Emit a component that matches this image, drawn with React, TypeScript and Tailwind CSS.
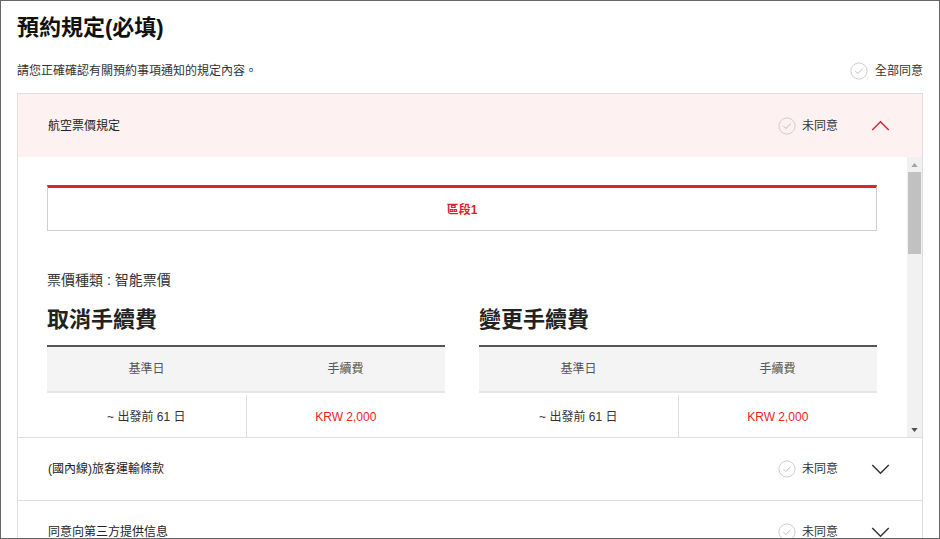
const font = { fontFamily: '"Liberation Sans", "Noto Sans CJK TC", sans-serif' };

function CheckCircle() {
  return (
    <svg viewBox="0 0 20 20" className="w-[18px] h-[18px] flex-shrink-0">
      <circle cx="10" cy="10" r="9" fill="none" stroke="#c9c9c9" strokeWidth="1" />
      <path d="M6 10.2l2.6 2.6L14 7.6" fill="none" stroke="#b5b5b5" strokeWidth="1" />
    </svg>
  );
}

function Chevron({ up }: { up?: boolean }) {
  return (
    <svg viewBox="0 0 20 12" className="w-[19px] h-[11px] ml-[33px]">
      <polyline
        points={up ? "1,11 10,2 19,11" : "1,1 10,10 19,1"}
        fill="none"
        stroke={up ? "#d8262e" : "#333"}
        strokeWidth="1.6"
      />
    </svg>
  );
}

const feeTables = [
  { title: "取消手續費", from: "~ 出發前 61 日", fee: "KRW 2,000" },
  { title: "變更手續費", from: "~ 出發前 61 日", fee: "KRW 2,000" },
];

function AccordionHeader({ title, open }: { title: string; open?: boolean }) {
  return (
    <div
      className={`h-[63px] flex items-center justify-between pl-[30px] pr-[32px] ${
        open ? "bg-[#fdf1f1]" : "bg-white border-t border-[#dedede]"
      }`}
    >
      <span className="text-[12px] text-[#222]">{title}</span>
      <div className="flex items-center">
        <CheckCircle />
        <span className="text-[12px] text-[#333] ml-[6px]">未同意</span>
        <Chevron up={open} />
      </div>
    </div>
  );
}

function Scrollbar() {
  return (
    <div className="w-[15px] flex-shrink-0 bg-[#f1f1f1] flex flex-col items-center">
      <div className="h-[15px] flex items-center justify-center">
        <svg viewBox="0 0 8 5" className="w-[7px] h-[4px]">
          <polygon points="0,5 4,0 8,5" fill="#a3a3a3" />
        </svg>
      </div>
      <div className="w-[13px] h-[82px] bg-[#c1c1c1]" />
      <div className="flex-1" />
      <div className="h-[15px] flex items-center justify-center">
        <svg viewBox="0 0 8 5" className="w-[7px] h-[4px]">
          <polygon points="0,0 8,0 4,5" fill="#505050" />
        </svg>
      </div>
    </div>
  );
}

export default function App() {
  return (
    <div
      className="w-[940px] h-[539px] border border-[#666] bg-white overflow-hidden px-4"
      style={font}
    >
      {/* Title */}
      <h1 className="pt-[12px] text-[22px] leading-[30px] font-bold text-[#111]">預約規定(必填)</h1>
      <div className="mt-[20px] flex items-center justify-between h-[16px]">
        <p className="text-[12px] text-[#333]">請您正確確認有關預約事項通知的規定內容。</p>
        <div className="flex items-center">
          <CheckCircle />
          <span className="text-[12px] text-[#333] ml-[7px]">全部同意</span>
        </div>
      </div>

      {/* Accordion */}
      <div className="mt-[14px] border border-[#dedede]">
        <AccordionHeader title="航空票價規定" open />
        <div className="h-[280px] flex">
          <div className="flex-1 overflow-hidden pl-[29px] pr-[30px] pt-[28px]">
            <div className="h-[46px] pt-[2px] border-t-[3px] border-t-[#d8262e] border-x border-b border-[#cfcfcf] flex items-center justify-center">
              <span className="text-[12px] font-bold text-[#d8262e]">區段1</span>
            </div>
            <p className="mt-[39px] text-[14px] text-[#333] leading-[20px]">票價種類 : 智能票價</p>
            <div className="mt-[15px] flex gap-[34px]">
              {feeTables.map((t) => (
                <div key={t.title} className="flex-1">
                  <h2 className="text-[22px] font-bold leading-[30px] text-[#222]">{t.title}</h2>
                  <div className="mt-[10px] border-t-2 border-[#555]">
                    <div className="flex h-[46px] bg-[#f4f4f4] border-b-2 border-[#e6e6e6] text-[12px] text-[#555]">
                      <div className="flex-1 flex items-center justify-center">基準日</div>
                      <div className="flex-1 flex items-center justify-center">手續費</div>
                    </div>
                    <div className="flex h-[46px] pt-[2px] border-b border-[#ddd] text-[12px]">
                      <div className="flex-1 flex items-center justify-center text-[#333] border-r border-[#ddd]">
                        {t.from}
                      </div>
                      <div className="flex-1 flex items-center justify-center text-[#e0262e]">{t.fee}</div>
                    </div>
                  </div>
                </div>
              ))}
            </div>
          </div>
          <Scrollbar />
        </div>
        <AccordionHeader title="(國內線)旅客運輸條款" />
        <AccordionHeader title="同意向第三方提供信息" />
      </div>
    </div>
  );
}
